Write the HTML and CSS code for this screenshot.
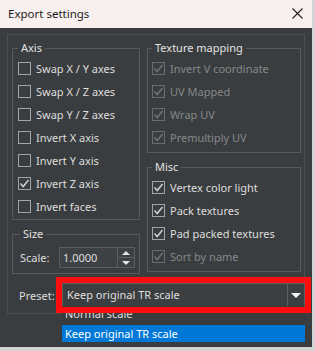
FILE: index.html
```html
<!DOCTYPE html>
<html lang="en">
<head>
    <meta charset="UTF-8">
    <meta name="viewport" content="width=device-width, initial-scale=1.0">
    <title>Export settings</title>
    <link rel="stylesheet" href="styles.css">
</head>
<body>
    <div class="window">
        <div class="titlebar">
            <span class="title">Export settings</span>
            <svg class="close" width="11" height="11" viewBox="0 0 11 11">
                <path d="M0.5 0.5L10.5 10.5M10.5 0.5L0.5 10.5" stroke="#1f1f1f" stroke-width="1.1" fill="none"/>
            </svg>
        </div>

        <div class="content">
            <div class="frame">
                <div class="columns">
                    <div class="col">
                        <fieldset class="group">
                            <legend>Axis</legend>
                            <div class="check"><span class="box"></span>Swap X / Y axes</div>
                            <div class="check"><span class="box"></span>Swap X / Z axes</div>
                            <div class="check"><span class="box"></span>Swap Y / Z axes</div>
                            <div class="check"><span class="box"></span>Invert X axis</div>
                            <div class="check"><span class="box"></span>Invert Y axis</div>
                            <div class="check checked"><span class="box"><svg viewBox="0 0 11 11"><path d="M1.5 5.5L4.2 8.5L9.5 2"/></svg></span>Invert Z axis</div>
                            <div class="check"><span class="box"></span>Invert faces</div>
                        </fieldset>

                        <fieldset class="group size">
                            <legend>Size</legend>
                            <div class="scale-row">
                                <span>Scale:</span>
                                <div class="spin">
                                    <span class="spin-value">1.0000</span>
                                    <div class="spin-buttons">
                                        <span class="spin-btn"><i class="tri-up"></i></span>
                                        <span class="spin-btn"><i class="tri-down"></i></span>
                                    </div>
                                </div>
                            </div>
                        </fieldset>
                    </div>

                    <div class="col">
                        <fieldset class="group texture">
                            <legend>Texture mapping</legend>
                            <div class="check checked disabled"><span class="box"><svg viewBox="0 0 11 11"><path d="M1.5 5.5L4.2 8.5L9.5 2"/></svg></span>Invert V coordinate</div>
                            <div class="check checked disabled"><span class="box"><svg viewBox="0 0 11 11"><path d="M1.5 5.5L4.2 8.5L9.5 2"/></svg></span>UV Mapped</div>
                            <div class="check checked disabled"><span class="box"><svg viewBox="0 0 11 11"><path d="M1.5 5.5L4.2 8.5L9.5 2"/></svg></span>Wrap UV</div>
                            <div class="check checked disabled"><span class="box"><svg viewBox="0 0 11 11"><path d="M1.5 5.5L4.2 8.5L9.5 2"/></svg></span>Premultiply UV</div>
                        </fieldset>

                        <fieldset class="group misc">
                            <legend>Misc</legend>
                            <div class="check checked"><span class="box"><svg viewBox="0 0 11 11"><path d="M1.5 5.5L4.2 8.5L9.5 2"/></svg></span>Vertex color light</div>
                            <div class="check checked"><span class="box"><svg viewBox="0 0 11 11"><path d="M1.5 5.5L4.2 8.5L9.5 2"/></svg></span>Pack textures</div>
                            <div class="check checked"><span class="box"><svg viewBox="0 0 11 11"><path d="M1.5 5.5L4.2 8.5L9.5 2"/></svg></span>Pad packed textures</div>
                            <div class="check checked disabled"><span class="box"><svg viewBox="0 0 11 11"><path d="M1.5 5.5L4.2 8.5L9.5 2"/></svg></span>Sort by name</div>
                        </fieldset>
                    </div>
                </div>

                <div class="preset-row">
                    <span class="preset-label">Preset:</span>
                    <div class="combo">
                        <span class="combo-value">Keep original TR scale</span>
                        <span class="combo-arrow"><i class="tri-down big"></i></span>
                        <!-- dropdown is open -->
                        <div class="combo-list">
                            <div class="combo-item first">Normal scale</div>
                            <div class="combo-item selected">Keep original TR scale</div>
                        </div>
                        <div class="highlight"></div>
                    </div>
                </div>
            </div>
        </div>
    </div>
</body>
</html>
```

FILE: styles.css
```css
body {
    margin: 0;
    background-color: #d4d4d6;
    font-family: "Noto Sans", "DejaVu Sans", sans-serif;
    font-size: 11px;
    color: #dedede;
}
.window {
    width: 312px;
    height: 347px;
    background-color: #3a3d3f;
}
.titlebar {
    height: 28px;
    background-color: #f8f0ee;
    display: flex;
    align-items: center;
    justify-content: space-between;
    padding: 0 9px 0 8px;
    color: #1b1b1b;
    box-sizing: border-box;
}
.title {
    font-size: 11.5px;
    margin-top: -1px;
}
.close {
    display: block;
    margin-top: -2px;
}
.content {
    padding: 6px 7px 0 7px;
}
.frame {
    border: 1px solid #4a4e50;
    padding: 5px 3px 6px 4px;
}
.columns {
    display: grid;
    grid-template-columns: 128px 154px;
    column-gap: 7px;
}
.group {
    margin: 0;
    min-width: 0;
    border: 1px solid #565a5c;
    padding: 1px 5px 1px 5px;
}
.group legend {
    padding: 0 3px;
    line-height: 16px;
    color: #e2e2e2;
}
.texture {
    padding-left: 4px;
    padding-bottom: 3px;
}
.misc {
    margin-top: 6px;
    padding-left: 4px;
    padding-bottom: 3px;
}
.size {
    margin-top: 6px;
    padding: 5px 4px 5px 7px;
}
.check {
    display: flex;
    align-items: center;
    gap: 5px;
    height: 23px;
    white-space: nowrap;
}
.box {
    width: 13px;
    height: 13px;
    box-sizing: border-box;
    border: 1px solid #a4a4a4;
    flex-shrink: 0;
}
.box svg {
    display: block;
    width: 11px;
    height: 11px;
}
.box path {
    fill: none;
    stroke: #d2d2d2;
    stroke-width: 1.5;
}
.disabled {
    color: #85888a;
}
.disabled .box {
    border-color: #6a6d6f;
}
.disabled .box path {
    stroke: #717476;
}
.scale-row {
    display: flex;
    align-items: center;
    justify-content: space-between;
}
.spin {
    display: flex;
    width: 76px;
    height: 21px;
    box-sizing: border-box;
    border: 1px solid #5a5e60;
    background-color: #3e4143;
}
.spin-value {
    flex: 1;
    padding-left: 3px;
    line-height: 19px;
}
.spin-buttons {
    width: 16px;
    border-left: 1px solid #5a5e60;
    display: flex;
    flex-direction: column;
}
.spin-btn {
    flex: 1;
    display: flex;
    align-items: center;
    justify-content: center;
}
.spin-btn + .spin-btn {
    border-top: 1px solid #5a5e60;
}
.tri-up {
    width: 0;
    height: 0;
    border-left: 4px solid transparent;
    border-right: 4px solid transparent;
    border-bottom: 4px solid #e4e4e4;
}
.tri-down {
    width: 0;
    height: 0;
    border-left: 4px solid transparent;
    border-right: 4px solid transparent;
    border-top: 4px solid #e4e4e4;
}
.tri-down.big {
    border-left-width: 5px;
    border-right-width: 5px;
    border-top-width: 5px;
    border-top-color: #f2f2f2;
}
.preset-row {
    display: grid;
    grid-template-columns: 43px 243px;
    align-items: center;
    margin-top: 9px;
    padding-left: 7px;
}
.combo {
    position: relative;
    display: flex;
    height: 24px;
    box-sizing: border-box;
    border: 1px solid #5c6062;
    background-color: #3c3f41;
}
.combo-value {
    flex: 1;
    padding-left: 4px;
    line-height: 22px;
    white-space: nowrap;
}
.combo-arrow {
    width: 16px;
    border-left: 1px solid #5c6062;
    display: flex;
    align-items: center;
    justify-content: center;
}
.combo-list {
    position: absolute;
    top: 100%;
    left: -1px;
    right: -1px;
    z-index: 1;
    background-color: #393c3e;
}
.combo-item {
    height: 17px;
    line-height: 17px;
    padding-left: 3px;
    white-space: nowrap;
}
.combo-item.first {
    height: 19px;
    line-height: 16px;
}
.combo-item.selected {
    background-color: #0078d7;
    color: #ffffff;
}
.highlight {
    position: absolute;
    top: -7px;
    left: -7px;
    right: -7px;
    bottom: -7px;
    border: 6px solid #ff0c0c;
    z-index: 2;
}
```
